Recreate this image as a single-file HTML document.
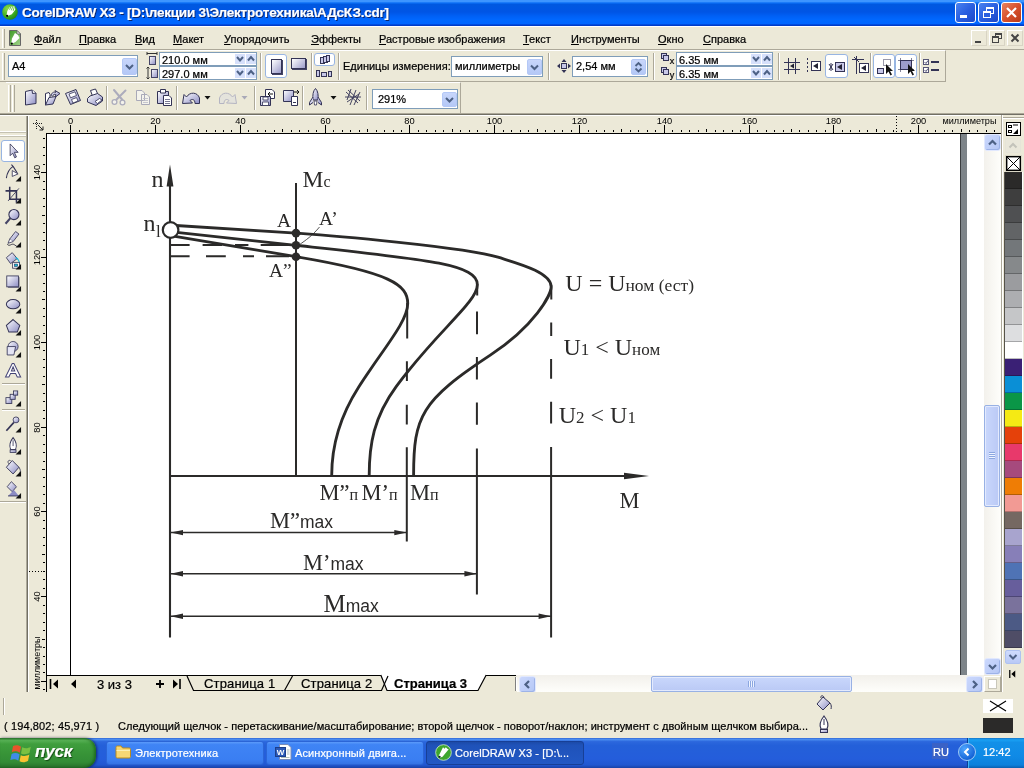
<!DOCTYPE html><html><head><meta charset="utf-8"><title>CorelDRAW X3</title><style>
*{box-sizing:border-box;margin:0;padding:0}
html,body{width:1024px;height:768px;overflow:hidden}
body{-webkit-text-stroke:0.22px currentColor;background:#ECE9D8;font-family:"Liberation Sans",sans-serif;font-size:11px;color:#000;position:relative}
.abs{position:absolute}
#title{left:0;top:0;width:1024px;height:26px;background:linear-gradient(to bottom,#3D95FF 0px,#3D95FF 1.5px,#0A6EF5 3px,#0058E0 4.5px,#0055E5 12px,#0060F5 16px,#0068FF 20px,#0066FF 23.5px,#0040D0 25px,#0038C0 26px)}
#title .t{left:22px;top:5px;color:#fff;font:bold 13.5px "Liberation Sans","DejaVu Sans",sans-serif;letter-spacing:-0.2px;white-space:nowrap;text-shadow:1px 1px 0 #0A246A}
.tb{top:2px;width:21px;height:21px;border:1px solid #fff;border-radius:3px;background:linear-gradient(135deg,#4A82F0 0%,#2A5FE0 50%,#1C48C8 100%)}
.tb.close{background:linear-gradient(135deg,#E8835F 0%,#D8512C 50%,#B83A18 100%)}
#menu{left:0;top:26px;width:1024px;height:24px;border-bottom:1px solid #ACA899;border-top:1px solid #fff}
#menu span{position:absolute;top:6px;white-space:nowrap;font-size:11px}
#menu u{text-decoration:underline}
.mdi{top:30px;width:16px;height:16px;border:1px solid;border-color:#fff #d8d4c4 #d8d4c4 #fff;background:#ECE9D8}
.grip{width:3px;border-left:1px solid #fff;border-right:1px solid #ACA899;background:#ECE9D8}
.field{background:#fff;border:1px solid #7F9DB9}
.combo-btn{background:linear-gradient(to bottom,#C8D6FB,#B4C8F6);border:1px solid #B4C8F6;border-radius:2px}
.sep{width:2px;border-left:1px solid #ACA899;border-right:1px solid #fff}
.txt{white-space:nowrap;font-size:11px}
</style></head><body><div id="root" style="position:absolute;left:0;top:0;width:1024px;height:768px;will-change:transform"><svg width="0" height="0" style="position:absolute"><defs><linearGradient id="gi" x1="0" y1="0" x2="1" y2="1"><stop offset="0" stop-color="#fff"/><stop offset="1" stop-color="#8C8CC4"/></linearGradient></defs></svg>
<div id="title" class="abs">
<svg class="abs" style="left:1px;top:3px" width="18" height="18" viewBox="1 3 18 18"><defs><radialGradient id="gc" cx="0.35" cy="0.3" r="0.8"><stop offset="0" stop-color="#8EDB4A"/><stop offset="0.6" stop-color="#3DAE22"/><stop offset="1" stop-color="#1C7A12"/></radialGradient></defs><circle cx="10" cy="12" r="7.800" fill="url(#gc)"/><path d="M6.400 16.400 L7.300 11 L10 6.800 L14.800 6.300 L15.300 9.800 L11.800 14.200 Z" fill="#fff"/><path d="M10.800 6.700 L9.600 9.700 M12.600 6.500 L11.400 10.300 M14.400 6.400 L13.200 10.800" stroke="#3DAE22" stroke-width="0.8"/><circle cx="7.100" cy="15.800" r="1.100" fill="#000"/></svg>
<div class="abs t">CorelDRAW X3 - [D:\лекции 3\Электротехника\АДсКЗ.cdr]</div>
<div class="abs tb" style="left:955px"><div class="abs" style="left:4px;top:12px;width:7px;height:3px;background:#fff"></div></div>
<div class="abs tb" style="left:978px"><div class="abs" style="left:7px;top:4px;width:8px;height:7px;border:1px solid #fff;border-top-width:2px"></div><div class="abs" style="left:4px;top:8px;width:8px;height:7px;border:1px solid #fff;border-top-width:2px;background:#2A5FE0"></div></div>
<div class="abs tb close" style="left:1001px"><svg width="19" height="19" viewBox="0 0 19 19"><path d="M5 5 L14 14 M14 5 L5 14" stroke="#fff" stroke-width="2.2"/></svg></div>
</div>
<div id="menu" class="abs">
<div class="abs grip" style="left:2px;top:2px;height:19px"></div>
<svg class="abs" style="left:9px;top:3px" width="13" height="16" viewBox="0 0 13 16"><defs><linearGradient id="gm" x1="0" y1="0" x2="1" y2="1"><stop offset="0" stop-color="#3E9A26"/><stop offset="1" stop-color="#A4D48C"/></linearGradient></defs><path d="M0.500 0.500 H8 L11.500 4 V15.500 H0.500 Z" fill="url(#gm)" stroke="#666"/><path d="M8 0.500 V4 H11.500 Z" fill="#EEE" stroke="#666" stroke-width="0.8"/><path d="M2.200 14 L3 8.500 L6 3 L9 5 L10.500 8 L6.500 12 Z" fill="#fff"/><circle cx="2.800" cy="13.600" r="1.100" fill="#000"/></svg>
<span style="left:34px"><u>Ф</u>айл</span>
<span style="left:79px"><u>П</u>равка</span>
<span style="left:135px"><u>В</u>ид</span>
<span style="left:173px"><u>М</u>акет</span>
<span style="left:224px"><u>У</u>порядочить</span>
<span style="left:311px"><u>Э</u>ффекты</span>
<span style="left:379px"><u>Р</u>астровые изображения</span>
<span style="left:523px"><u>Т</u>екст</span>
<span style="left:571px"><u>И</u>нструменты</span>
<span style="left:658px"><u>О</u>кно</span>
<span style="left:703px"><u>С</u>правка</span>
</div>
<div class="abs mdi" style="left:971px"><div class="abs" style="left:3px;top:10px;width:6px;height:2px;background:#444"></div></div>
<div class="abs mdi" style="left:989px"><div class="abs" style="left:5px;top:2px;width:7px;height:6px;border:1px solid #444;border-top-width:2px"></div><div class="abs" style="left:2px;top:5px;width:7px;height:7px;border:1px solid #444;border-top-width:2px;background:#ECE9D8"></div></div>
<div class="abs mdi" style="left:1007px"><svg width="14" height="14" viewBox="0 0 14 14"><path d="M3.5 3.5 L10.5 10.5 M10.5 3.5 L3.5 10.5" stroke="#444" stroke-width="2"/></svg></div>
<div class="abs" style="left:0;top:50px;width:946px;height:32px;border-top:1px solid #fff;border-bottom:1px solid #ACA899;border-right:1px solid #ACA899"></div>
<div class="abs grip" style="left:2px;top:53px;height:27px"></div>
<div class="abs field" style="left:8px;top:55px;width:130px;height:22px"><span class="abs txt" style="left:3px;top:4px">A4</span><div class="abs combo-btn" style="left:113px;top:2px;width:15px;height:17px"><svg width="13" height="15" viewBox="0 0 13 15"><path d="M3.0 6.0 L6.5 9.5 L10.0 6.0" stroke="#4D6185" stroke-width="2" fill="none"/></svg></div></div>
<svg class="abs" style="left:146px;top:52px" width="12" height="28" viewBox="0 0 12 28"><path d="M1 1.5 H11 M1 0 V3 M11 0 V3" stroke="#333" fill="none"/><rect x="3.5" y="4.5" width="6" height="8" fill="url(#gi)" stroke="#446"/><path d="M2 15 V27 M0.5 16.5 L2 15 L3.5 16.5 M0.5 25.5 L2 27 L3.5 25.5" stroke="#333" fill="none"/><rect x="5.5" y="17.5" width="6" height="8" fill="url(#gi)" stroke="#446"/></svg>
<div class="abs field" style="left:159px;top:52px;width:98px;height:14px"><span class="abs txt" style="left:2px;top:1px">210.0 мм</span><svg class="abs" style="left:75px;top:1px" width="22" height="10" viewBox="0 0 22 10"><rect x="0" y="0" width="10" height="10" fill="#D6E0FB"/><rect x="11" y="0" width="10" height="10" fill="#D6E0FB"/><path d="M2 3 L5 6.5 L8 3" stroke="#4D6185" stroke-width="2" fill="none"/><path d="M13 6.5 L16 3 L19 6.5" stroke="#4D6185" stroke-width="2" fill="none"/></svg></div>
<div class="abs field" style="left:159px;top:66px;width:98px;height:14px"><span class="abs txt" style="left:2px;top:1px">297.0 мм</span><svg class="abs" style="left:75px;top:1px" width="22" height="10" viewBox="0 0 22 10"><rect x="0" y="0" width="10" height="10" fill="#D6E0FB"/><rect x="11" y="0" width="10" height="10" fill="#D6E0FB"/><path d="M2 3 L5 6.5 L8 3" stroke="#4D6185" stroke-width="2" fill="none"/><path d="M13 6.5 L16 3 L19 6.5" stroke="#4D6185" stroke-width="2" fill="none"/></svg></div>
<div class="abs sep" style="left:260px;top:53px;height:27px"></div>
<div class="abs" style="left:265px;top:54px;width:22px;height:24px;border:1px solid #98B5E2;border-radius:3px;background:#fff"><div class="abs" style="left:5px;top:4px;width:11px;height:15px;border:1px solid #335;background:linear-gradient(135deg,#fff,#9C9CCB);box-shadow:1px 1px 0 #446"></div></div>
<div class="abs" style="left:291px;top:58px;width:15px;height:11px;border:1px solid #335;background:linear-gradient(135deg,#fff,#9C9CCB);box-shadow:1px 1px 0 #446"></div>
<div class="abs sep" style="left:311px;top:53px;height:27px"></div>
<div class="abs" style="left:314px;top:53px;width:21px;height:13px;border:1px solid #98B5E2;border-radius:3px;background:#fff"><svg class="abs" style="left:4px;top:1px" width="12" height="10" viewBox="0 0 12 10"><rect x="1.5" y="2.5" width="4" height="6" fill="#C8C8E8" stroke="#335"/><rect x="4.5" y="1.5" width="4" height="6" fill="#C8C8E8" stroke="#335"/><rect x="7.5" y="0.5" width="3" height="6" fill="#C8C8E8" stroke="#335"/></svg></div>
<svg class="abs" style="left:316px;top:69px" width="18" height="9" viewBox="0 0 18 9"><rect x="0.5" y="1.5" width="3" height="6" fill="#C8C8E8" stroke="#335"/><rect x="5.5" y="3.5" width="5" height="4" fill="#C8C8E8" stroke="#335"/><rect x="12.5" y="2.5" width="3" height="5" fill="#C8C8E8" stroke="#335"/></svg>
<div class="abs sep" style="left:338px;top:53px;height:27px"></div>
<span class="abs txt" style="left:343px;top:60px">Единицы измерения:</span>
<div class="abs field" style="left:451px;top:56px;width:92px;height:21px"><span class="abs txt" style="left:3px;top:3px">миллиметры</span><div class="abs combo-btn" style="left:75px;top:2px;width:15px;height:16px"><svg width="13" height="14" viewBox="0 0 13 14"><path d="M3.0 5.5 L6.5 9.0 L10.0 5.5" stroke="#4D6185" stroke-width="2" fill="none"/></svg></div></div>
<div class="abs sep" style="left:548px;top:53px;height:27px"></div>
<svg class="abs" style="left:557px;top:59px" width="14" height="14" viewBox="0 0 14 14"><rect x="4.5" y="4.5" width="5" height="5" fill="#C8C8E8" stroke="#335"/><path d="M7 0 L9.5 3 H4.5 Z M7 14 L9.5 11 H4.5 Z M0 7 L3 4.5 V9.5 Z M14 7 L11 4.5 V9.5 Z" fill="#335"/></svg>
<div class="abs field" style="left:572px;top:56px;width:76px;height:21px"><span class="abs txt" style="left:3px;top:3px">2,54 мм</span><div class="abs combo-btn" style="left:58px;top:2px;width:15px;height:16px"><svg width="13" height="14" viewBox="0 0 13 14"><path d="M3.5 6 L6.5 3 L9.5 6 M3.5 8.5 L6.5 11.5 L9.5 8.5" stroke="#4D6185" stroke-width="1.8" fill="none"/></svg></div></div>
<div class="abs sep" style="left:653px;top:53px;height:27px"></div>
<svg class="abs" style="left:660px;top:52px" width="16" height="14" viewBox="0 0 16 14"><rect x="1.5" y="1.5" width="5" height="5" fill="#C8C8E8" stroke="#335"/><rect x="3.5" y="3.5" width="5" height="5" fill="#C8C8E8" stroke="#335"/><text x="9.5" y="12" font-family="Liberation Sans,sans-serif" font-size="9" font-weight="bold" fill="#222">x</text></svg>
<div class="abs field" style="left:676px;top:52px;width:97px;height:14px"><span class="abs txt" style="left:2px;top:1px">6.35 мм</span><svg class="abs" style="left:74px;top:1px" width="22" height="10" viewBox="0 0 22 10"><rect x="0" y="0" width="10" height="10" fill="#D6E0FB"/><rect x="11" y="0" width="10" height="10" fill="#D6E0FB"/><path d="M2 3 L5 6.5 L8 3" stroke="#4D6185" stroke-width="2" fill="none"/><path d="M13 6.5 L16 3 L19 6.5" stroke="#4D6185" stroke-width="2" fill="none"/></svg></div>
<svg class="abs" style="left:660px;top:66px" width="16" height="14" viewBox="0 0 16 14"><rect x="1.5" y="1.5" width="5" height="5" fill="#C8C8E8" stroke="#335"/><rect x="3.5" y="3.5" width="5" height="5" fill="#C8C8E8" stroke="#335"/><text x="9.5" y="12" font-family="Liberation Sans,sans-serif" font-size="9" font-weight="bold" fill="#222">y</text></svg>
<div class="abs field" style="left:676px;top:66px;width:97px;height:14px"><span class="abs txt" style="left:2px;top:1px">6.35 мм</span><svg class="abs" style="left:74px;top:1px" width="22" height="10" viewBox="0 0 22 10"><rect x="0" y="0" width="10" height="10" fill="#D6E0FB"/><rect x="11" y="0" width="10" height="10" fill="#D6E0FB"/><path d="M2 3 L5 6.5 L8 3" stroke="#4D6185" stroke-width="2" fill="none"/><path d="M13 6.5 L16 3 L19 6.5" stroke="#4D6185" stroke-width="2" fill="none"/></svg></div>
<div class="abs sep" style="left:778px;top:53px;height:27px"></div>
<svg class="abs" style="left:784px;top:58px" width="16" height="16" viewBox="0 0 16 16"><path d="M4.5 0 V16 M11.5 0 V16 M0 4.5 H16 M0 11.5 H16" stroke="#335" fill="none"/><path d="M6 8 L10 5.5 V10.5 Z" fill="#223"/></svg>
<svg class="abs" style="left:806px;top:58px" width="16" height="16" viewBox="0 0 16 16"><path d="M1.5 0 V16" stroke="#335" stroke-dasharray="2 2"/><rect x="5.5" y="3.5" width="9" height="9" fill="#fff" stroke="#335"/><path d="M7 8 L12 5 V11 Z" fill="#223"/></svg>
<div class="abs" style="left:825px;top:54px;width:23px;height:24px;border:1px solid #98B5E2;border-radius:3px;background:#fff"><svg class="abs" style="left:2px;top:4px" width="18" height="16" viewBox="0 0 18 16"><path d="M1 5 L5 11 M5 5 L1 11 M3 4 V12" stroke="#335"/><rect x="7.5" y="3.5" width="9" height="9" fill="#C8C8E8" stroke="#335"/><path d="M9 8 L14 5 V11 Z" fill="#223"/></svg></div>
<svg class="abs" style="left:852px;top:56px" width="18" height="18" viewBox="0 0 18 18"><path d="M0 3.5 H12 M4.5 0 V18 M2 1 L7 6" stroke="#335"/><rect x="7.5" y="7.5" width="9" height="9" fill="#fff" stroke="#335"/><path d="M9 12 L14 9 V15 Z" fill="#223"/></svg>
<div class="abs sep" style="left:870px;top:53px;height:27px"></div>
<div class="abs" style="left:873px;top:54px;width:22px;height:24px;border:1px solid #98B5E2;border-radius:3px;background:#fff"><svg class="abs" style="left:2px;top:3px" width="18" height="18" viewBox="0 0 18 18"><rect x="7.5" y="1.5" width="7" height="6" fill="none" stroke="#335" stroke-dasharray="1 1"/><rect x="1.5" y="10.5" width="6" height="5" fill="#C8C8E8" stroke="#335"/><path d="M10 6 V16 L12.5 13.5 L14.5 17.5 L16 16.5 L14 13 H17 Z" fill="#111"/></svg></div>
<div class="abs" style="left:895px;top:54px;width:22px;height:24px;border:1px solid #98B5E2;border-radius:3px;background:#fff"><svg class="abs" style="left:2px;top:3px" width="18" height="18" viewBox="0 0 18 18"><rect x="2.5" y="2.5" width="11" height="9" fill="#9C9CCB" stroke="#335"/><path d="M0 2.5 H16 M2.5 0 V14 M13.5 0 V14 M0 11.5 H16" stroke="#335" stroke-width="0.6"/><path d="M10 6 V16 L12.5 13.5 L14.5 17.5 L16 16.5 L14 13 H17 Z" fill="#111"/></svg></div>
<div class="abs sep" style="left:919px;top:53px;height:27px"></div>
<svg class="abs" style="left:923px;top:58px" width="17" height="16" viewBox="0 0 17 16"><rect x="0.5" y="1.5" width="5" height="5" fill="#fff" stroke="#557"/><rect x="0.5" y="9.5" width="5" height="5" fill="#fff" stroke="#557"/><path d="M1.5 4 L3 5.5 L5 2.5 M1.5 12 L3 13.5 L5 10.5" stroke="#557" fill="none"/><path d="M8 4 H16 M8 12 H16" stroke="#335" stroke-width="2"/></svg>
<div class="abs" style="left:6px;top:82px;width:455px;height:31px;border-top:1px solid #fff;border-right:1px solid #ACA899"></div>
<div class="abs grip" style="left:8px;top:85px;height:27px"></div>
<div class="abs grip" style="left:12px;top:85px;height:27px"></div>
<svg class="abs" style="left:22px;top:88px" width="18" height="18" viewBox="0 0 18 18"><path d="M3.500 3.500 L10 2 L14 5 V15.500 L3.500 17 Z" fill="url(#gi)" stroke="#335" stroke-linejoin="round"/><path d="M10 2 L10.500 5.500 L14 5" fill="#fff" stroke="#335" stroke-linejoin="round"/></svg>
<svg class="abs" style="left:43px;top:88px" width="18" height="18" viewBox="0 0 18 18"><path d="M2.500 17 L2.500 5.500 L6 4.500 L7 6.500 L7 14 Z" fill="#fff" stroke="#335" stroke-linejoin="round"/><path d="M2.500 17 L6 9.500 L13 8.500 L10 16 Z" fill="url(#gi)" stroke="#335" stroke-linejoin="round"/><path d="M8 8 C8.500 4.500 11 3.500 12.500 4.500 L12 2.500 L17 5.500 L12.500 9 L12.800 6.500 C11.500 6 10 6.500 9.500 8.500" fill="url(#gi)" stroke="#335" stroke-linejoin="round"/></svg>
<svg class="abs" style="left:64px;top:88px" width="18" height="18" viewBox="0 0 18 18"><path d="M1.5 5.5 L12 1.5 L16.5 12.5 L6.5 16.5 Z" fill="url(#gi)" stroke="#335"/><path d="M5 6 L11 3.8 L12.5 7.5 L6.5 9.8 Z M7.5 11.5 L12.5 9.6 L14 13 L9 15 Z" fill="#fff" stroke="#335" stroke-width="0.8"/></svg>
<svg class="abs" style="left:86px;top:88px" width="18" height="18" viewBox="0 0 18 18"><path d="M4.500 2.500 L9.500 1 L12 6.500 L6.500 8 Z" fill="#fff" stroke="#335" stroke-linejoin="round"/><path d="M1.500 10.500 L4 8 L11.500 5.500 L16.500 9 L16.500 13 L10 17.500 L1.500 14 Z" fill="url(#gi)" stroke="#335" stroke-linejoin="round"/><path d="M9 13.500 L13.500 10.500 L16 12 L11.500 15.500 Z" fill="#fff" stroke="#335" stroke-width="0.8"/></svg>
<div class="abs sep" style="left:106px;top:86px;height:24px"></div>
<svg class="abs" style="left:110px;top:88px" width="18" height="18" viewBox="0 0 18 18"><path d="M4 2 L12.500 12 M15.500 2.500 L6 12" stroke="#ACACBC" stroke-width="2" fill="none" stroke-linecap="round"/><circle cx="4.500" cy="14" r="2.400" fill="#F4F3EC" stroke="#ACACBC" stroke-width="1.300"/><circle cx="12.500" cy="14.500" r="2.400" fill="#F4F3EC" stroke="#ACACBC" stroke-width="1.300"/></svg>
<svg class="abs" style="left:134px;top:88px" width="18" height="18" viewBox="0 0 18 18"><path d="M2.5 2.5 H8 L10.5 5 V12.5 H2.5 Z M7.5 6.5 H13 L15.5 9 V16.5 H7.5 Z" fill="#F4F3EC" stroke="#A9A9B8"/><path d="M9 10.5 H14 M9 12.5 H14 M9 14.5 H14" stroke="#B9B9C6" stroke-width="0.8"/></svg>
<svg class="abs" style="left:156px;top:88px" width="18" height="18" viewBox="0 0 18 18"><path d="M1.5 3.5 H12.5 V15.5 H1.5 Z" fill="url(#gi)" stroke="#335"/><path d="M4.5 1.5 H9.5 V5 H4.5 Z" fill="#fff" stroke="#335"/><path d="M7.5 7.5 H13 L15.5 10 V17.5 H7.5 Z" fill="#fff" stroke="#335"/><path d="M9 11.5 H14 M9 13.5 H14 M9 15.5 H14" stroke="#557" stroke-width="0.8"/></svg>
<div class="abs sep" style="left:176px;top:86px;height:24px"></div>
<svg class="abs" style="left:181px;top:88px" width="20" height="18" viewBox="0 0 20 18"><path d="M1.500 15.500 L3 6.500 L5.500 9 C9 3.500 16.500 4 18.500 10 L18.500 15.500 L14 15.500 C14 11.500 11.500 10.500 9 12.500 L11.500 15 Z" fill="url(#gi)" stroke="#335" stroke-linejoin="round"/></svg>
<svg class="abs" style="left:204px;top:96px" width="7" height="4" viewBox="0 0 7 4"><path d="M0.5 0 H6.5 L3.5 3.5 Z" fill="#111"/></svg>
<svg class="abs" style="left:218px;top:88px" width="20" height="18" viewBox="0 0 20 18"><path d="M18.500 15.500 L17 6.500 L14.500 9 C11 3.500 3.500 4 1.500 10 L1.500 15.500 L6 15.500 C6 11.500 8.500 10.500 11 12.500 L8.500 15 Z" fill="#E4E3DC" stroke="#B4B4C2" stroke-linejoin="round"/></svg>
<svg class="abs" style="left:241px;top:96px" width="7" height="4" viewBox="0 0 7 4"><path d="M0.5 0 H6.5 L3.5 3.5 Z" fill="#A9A9B8"/></svg>
<div class="abs sep" style="left:254px;top:86px;height:24px"></div>
<svg class="abs" style="left:259px;top:88px" width="18" height="18" viewBox="0 0 18 18"><path d="M6.5 1.5 H13 L15.5 4 V10.5 H6.5 Z" fill="#fff" stroke="#335"/><path d="M1.5 8.5 H11.5 V17.5 H1.5 Z" fill="url(#gi)" stroke="#335"/><path d="M4 9 H9 V12 H4 Z M3.5 14 H9.5 V17.5 H3.5 Z" fill="#fff" stroke="#335" stroke-width="0.8"/><path d="M14 6 H9 M11 4 L9 6 L11 8" stroke="#111" fill="none"/></svg>
<svg class="abs" style="left:282px;top:88px" width="18" height="18" viewBox="0 0 18 18"><path d="M1.5 2.5 H11.5 V13.5 H1.5 Z" fill="url(#gi)" stroke="#335"/><path d="M9.5 8.5 H15.5 V17.5 H9.5 Z" fill="#fff" stroke="#335"/><path d="M11 14.5 h3" stroke="#335"/><path d="M12 4 H17 M15 2 L17 4 L15 6" stroke="#111" fill="none"/></svg>
<div class="abs sep" style="left:302px;top:86px;height:24px"></div>
<svg class="abs" style="left:307px;top:88px" width="18" height="18" viewBox="0 0 18 18"><path d="M8.5 0.5 C11 3 11.5 7 11 12 H6 C5.5 7 6 3 8.5 0.5 Z" fill="url(#gi)" stroke="#335"/><path d="M6 9 L2.5 14.5 V17 L6 14.5 M11 9 L14.5 14.5 V17 L11 14.5" fill="url(#gi)" stroke="#335"/><path d="M7 13 H10 L9.5 17 H7.5 Z" fill="#fff" stroke="#335" stroke-width="0.8"/></svg>
<svg class="abs" style="left:330px;top:96px" width="7" height="4" viewBox="0 0 7 4"><path d="M0.5 0 H6.5 L3.5 3.5 Z" fill="#111"/></svg>
<svg class="abs" style="left:344px;top:88px" width="18" height="18" viewBox="0 0 18 18"><path d="M2 4 L14 15 M4 2 L16 13 M7 1 L3 12 M12 2 L6 17 M16 4 L10 17 M1 9 H17 M3 14 L15 6" stroke="#335" stroke-width="0.9" fill="none"/></svg>
<div class="abs sep" style="left:366px;top:86px;height:24px"></div>
<div class="abs field" style="left:372px;top:89px;width:86px;height:20px"><span class="abs txt" style="left:5px;top:3px">291%</span><div class="abs combo-btn" style="left:69px;top:2px;width:15px;height:15px"><svg width="13" height="13" viewBox="0 0 13 13"><path d="M3.0 5.0 L6.5 8.5 L10.0 5.0" stroke="#4D6185" stroke-width="2" fill="none"/></svg></div></div>
<div class="abs" style="left:0;top:113px;width:1024px;height:1px;background:#ACA899"></div>
<div class="abs" style="left:0;top:114px;width:1024px;height:1px;background:#716F64"></div>
<div class="abs" style="left:0;top:115px;width:1024px;height:1px;background:#fff"></div>
<div class="abs" style="left:0;top:116px;width:28px;height:576px;border-right:1px solid #716F64;background:#ECE9D8"></div><div class="abs" style="left:26px;top:116px;width:1px;height:576px;background:#ACA899"></div>
<div class="abs" style="left:0px;top:131px;width:26px;height:2px;border-top:1px solid #fff;border-bottom:1px solid #C5C2B2"></div><div class="abs" style="left:0px;top:135px;width:26px;height:2px;border-top:1px solid #fff;border-bottom:1px solid #C5C2B2"></div>
<div class="abs" style="left:1px;top:140px;width:24px;height:22px;border:1px solid #98B5E2;border-radius:3px;background:#fff"></div>
<svg class="abs" style="left:3px;top:141px" width="21" height="19.320" viewBox="0 0 25 23"><path d="M8.5 3.5 V17.5 L11.5 14.5 L14 20 L16 19 L13.5 13.5 H18 Z" fill="url(#gi)" stroke="#335"/></svg>
<svg class="abs" style="left:3px;top:163px" width="21" height="19.320" viewBox="0 0 25 23"><path d="M4 18 C5 10 9 6 12 4 M12 4 L10 2 M12 4 L17 12" stroke="#335" fill="none" stroke-width="1.3"/><path d="M11 9 L18 13 L11 16 Z" fill="#fff" stroke="#335"/><path d="M17.500 12.500 V19 H11 Z" fill="#111" transform="translate(4 3)"/></svg>
<svg class="abs" style="left:3px;top:185px" width="21" height="19.320" viewBox="0 0 25 23"><path d="M8 2 V17 H21 M3 7 H16 V21" stroke="#335" stroke-width="1.8" fill="none"/><path d="M6 19 L19 4" stroke="#335"/><path d="M17.500 12.500 V19 H11 Z" fill="#111" transform="translate(4 3)"/></svg>
<svg class="abs" style="left:3px;top:207px" width="21" height="19.320" viewBox="0 0 25 23"><circle cx="13" cy="9" r="6" fill="url(#gi)" stroke="#335" stroke-width="1.3"/><path d="M9 13 L3 20" stroke="#446" stroke-width="2.5"/><path d="M17.500 12.500 V19 H11 Z" fill="#111" transform="translate(4 3)"/></svg>
<svg class="abs" style="left:3px;top:229px" width="21" height="19.320" viewBox="0 0 25 23"><path d="M8 12 L15 3 L19 6 L12 15 Z" fill="url(#gi)" stroke="#335"/><path d="M8 12 L6 17 L12 15" fill="#fff" stroke="#335"/><path d="M5 18 C8 22 10 16 14 19 S 17 21 18 20" stroke="#223" fill="none"/><path d="M17.500 12.500 V19 H11 Z" fill="#111" transform="translate(4 3)"/></svg>
<svg class="abs" style="left:3px;top:251px" width="21" height="19.320" viewBox="0 0 25 23"><path d="M4 8 L11 2 L17 9 L9 15 Z" fill="url(#gi)" stroke="#335"/><path d="M15 8 C19 10 20 14 19 17" stroke="#19B5D8" stroke-width="1.6" fill="none"/><rect x="11.5" y="13.5" width="8" height="7" fill="#fff" stroke="#335"/><rect x="13.5" y="15.5" width="4" height="3" fill="#19B5D8" stroke="#335" stroke-width="0.7"/><path d="M17.500 12.500 V19 H11 Z" fill="#111" transform="translate(4 3)"/></svg>
<svg class="abs" style="left:3px;top:273px" width="21" height="19.320" viewBox="0 0 25 23"><rect x="4.5" y="3.5" width="14" height="13" fill="url(#gi)" stroke="#335"/><path d="M19 5 V17 H6" stroke="#446" fill="none"/><path d="M17.500 12.500 V19 H11 Z" fill="#111" transform="translate(4 3)"/></svg>
<svg class="abs" style="left:3px;top:295px" width="21" height="19.320" viewBox="0 0 25 23"><ellipse cx="12" cy="11" rx="8" ry="5.5" fill="url(#gi)" stroke="#335" stroke-width="1.2"/><path d="M17.500 12.500 V19 H11 Z" fill="#111" transform="translate(4 3)"/></svg>
<svg class="abs" style="left:3px;top:317px" width="21" height="19.320" viewBox="0 0 25 23"><path d="M12 3 L20 10 L17 18 H7 L4 10 Z" fill="url(#gi)" stroke="#335" stroke-width="1.2"/><path d="M17.500 12.500 V19 H11 Z" fill="#111" transform="translate(4 3)"/></svg>
<svg class="abs" style="left:3px;top:339px" width="21" height="19.320" viewBox="0 0 25 23"><circle cx="12" cy="9" r="6" fill="url(#gi)" stroke="#335"/><path d="M5 9 H15 L13 19 H5 Z" fill="#E4E4F4" stroke="#335"/><path d="M17.500 12.500 V19 H11 Z" fill="#111" transform="translate(4 3)"/></svg>
<svg class="abs" style="left:3px;top:361px" width="21" height="19.320" viewBox="0 0 25 23"><path d="M3 19 L11 3 H13 L21 19 H17 L15 15 H9 L7 19 Z M10 12 H14 L12 7 Z" fill="#fff" stroke="#447" stroke-width="1.2" fill-rule="evenodd"/></svg>
<div class="abs" style="left:2px;top:383px;width:23px;height:2px;border-top:1px solid #ACA899;border-bottom:1px solid #fff"></div>
<svg class="abs" style="left:3px;top:388px" width="21" height="19.320" viewBox="0 0 25 23"><rect x="3.5" y="11.5" width="7" height="7" fill="url(#gi)" stroke="#335"/><rect x="8.5" y="7.5" width="6" height="6" fill="url(#gi)" stroke="#335"/><rect x="12.5" y="3.5" width="5" height="5" fill="url(#gi)" stroke="#335"/><path d="M17.500 12.500 V19 H11 Z" fill="#111" transform="translate(4 3)"/></svg>
<div class="abs" style="left:2px;top:409px;width:23px;height:2px;border-top:1px solid #ACA899;border-bottom:1px solid #fff"></div>
<svg class="abs" style="left:3px;top:414px" width="21" height="19.320" viewBox="0 0 25 23"><path d="M4 20 L13 10" stroke="#335" stroke-width="2"/><circle cx="15.5" cy="7" r="3.5" fill="url(#gi)" stroke="#335"/><path d="M17.500 12.500 V19 H11 Z" fill="#111" transform="translate(4 3)"/></svg>
<svg class="abs" style="left:3px;top:436px" width="21" height="19.320" viewBox="0 0 25 23"><path d="M12 2 C8 7 7 11 9 16 H15 C17 11 16 7 12 2 Z" fill="#fff" stroke="#335" stroke-width="1.2"/><path d="M12 5 V12" stroke="#335"/><rect x="8.500" y="16.500" width="7" height="3" fill="url(#gi)" stroke="#335"/><path d="M17.500 12.500 V19 H11 Z" fill="#111" transform="translate(4 3)"/></svg>
<svg class="abs" style="left:3px;top:458px" width="21" height="19.320" viewBox="0 0 25 23"><path d="M4 11 L11 3 L19 11 L12 19 Z" fill="url(#gi)" stroke="#335" stroke-width="1.1"/><path d="M9 3 C6 2 5 5 7 7" stroke="#335" fill="none"/><path d="M19 11 C21 14 21 16 20 18" stroke="#335" fill="none"/><path d="M17.500 12.500 V19 H11 Z" fill="#111" transform="translate(4 3)"/></svg>
<svg class="abs" style="left:3px;top:480px" width="21" height="19.320" viewBox="0 0 25 23"><path d="M5 8 L10 2 L16 8 L11 14 Z" fill="url(#gi)" stroke="#335"/><path d="M6 19 H19 L13 12 Z" fill="#8C8CC4" stroke="none"/><path d="M6 19 H19" stroke="#335"/><path d="M17.500 12.500 V19 H11 Z" fill="#111" transform="translate(4 3)"/></svg>
<div class="abs" style="left:0px;top:501px;width:26px;height:2px;border-top:1px solid #ACA899;border-bottom:1px solid #fff"></div>
<div class="abs" style="left:28px;top:116px;width:973px;height:18px;background:#ECE9D8;border-left:1px solid #fff;border-bottom:1px solid #000"></div>
<div class="abs" style="left:28px;top:116px;width:19px;height:576px;background:#ECE9D8;border-left:1px solid #fff;border-right:1px solid #000"></div>
<div class="abs" style="left:28px;top:116px;width:19px;height:17px;background:#ECE9D8;border-left:1px solid #fff"></div>
<svg class="abs" style="left:33px;top:120px" width="12" height="12" viewBox="0 0 12 12"><path d="M3.5 0 V10 M0 3.5 H10" stroke="#222" stroke-dasharray="1 1"/><path d="M5 5 L10 10 M10 6.5 V10 H6.500" stroke="#222" fill="none"/></svg>
<svg class="abs" style="left:46px;top:116px" width="955" height="18" viewBox="46 116 955 18" font-family="Liberation Sans,sans-serif" font-size="9.300" fill="#000"><rect x="53" y="130" width="1" height="2" fill="#000"/><rect x="62" y="130" width="1" height="2" fill="#000"/><rect x="70" y="125" width="1" height="8" fill="#000"/><text x="70.5" y="124" text-anchor="middle">0</text><rect x="79" y="130" width="1" height="2" fill="#000"/><rect x="87" y="130" width="1" height="2" fill="#000"/><rect x="96" y="130" width="1" height="2" fill="#000"/><rect x="104" y="130" width="1" height="2" fill="#000"/><rect x="113" y="129" width="1" height="3" fill="#000"/><rect x="121" y="130" width="1" height="2" fill="#000"/><rect x="130" y="130" width="1" height="2" fill="#000"/><rect x="138" y="130" width="1" height="2" fill="#000"/><rect x="147" y="130" width="1" height="2" fill="#000"/><rect x="155" y="125" width="1" height="8" fill="#000"/><text x="155.5" y="124" text-anchor="middle">20</text><rect x="164" y="130" width="1" height="2" fill="#000"/><rect x="172" y="130" width="1" height="2" fill="#000"/><rect x="181" y="130" width="1" height="2" fill="#000"/><rect x="189" y="130" width="1" height="2" fill="#000"/><rect x="198" y="129" width="1" height="3" fill="#000"/><rect x="206" y="130" width="1" height="2" fill="#000"/><rect x="215" y="130" width="1" height="2" fill="#000"/><rect x="223" y="130" width="1" height="2" fill="#000"/><rect x="231" y="130" width="1" height="2" fill="#000"/><rect x="240" y="125" width="1" height="8" fill="#000"/><text x="240.5" y="124" text-anchor="middle">40</text><rect x="248" y="130" width="1" height="2" fill="#000"/><rect x="257" y="130" width="1" height="2" fill="#000"/><rect x="265" y="130" width="1" height="2" fill="#000"/><rect x="274" y="130" width="1" height="2" fill="#000"/><rect x="282" y="129" width="1" height="3" fill="#000"/><rect x="291" y="130" width="1" height="2" fill="#000"/><rect x="299" y="130" width="1" height="2" fill="#000"/><rect x="308" y="130" width="1" height="2" fill="#000"/><rect x="316" y="130" width="1" height="2" fill="#000"/><rect x="325" y="125" width="1" height="8" fill="#000"/><text x="325.5" y="124" text-anchor="middle">60</text><rect x="333" y="130" width="1" height="2" fill="#000"/><rect x="342" y="130" width="1" height="2" fill="#000"/><rect x="350" y="130" width="1" height="2" fill="#000"/><rect x="359" y="130" width="1" height="2" fill="#000"/><rect x="367" y="129" width="1" height="3" fill="#000"/><rect x="376" y="130" width="1" height="2" fill="#000"/><rect x="384" y="130" width="1" height="2" fill="#000"/><rect x="393" y="130" width="1" height="2" fill="#000"/><rect x="401" y="130" width="1" height="2" fill="#000"/><rect x="409" y="125" width="1" height="8" fill="#000"/><text x="409.5" y="124" text-anchor="middle">80</text><rect x="418" y="130" width="1" height="2" fill="#000"/><rect x="426" y="130" width="1" height="2" fill="#000"/><rect x="435" y="130" width="1" height="2" fill="#000"/><rect x="443" y="130" width="1" height="2" fill="#000"/><rect x="452" y="129" width="1" height="3" fill="#000"/><rect x="460" y="130" width="1" height="2" fill="#000"/><rect x="469" y="130" width="1" height="2" fill="#000"/><rect x="477" y="130" width="1" height="2" fill="#000"/><rect x="486" y="130" width="1" height="2" fill="#000"/><rect x="494" y="125" width="1" height="8" fill="#000"/><text x="494.5" y="124" text-anchor="middle">100</text><rect x="503" y="130" width="1" height="2" fill="#000"/><rect x="511" y="130" width="1" height="2" fill="#000"/><rect x="520" y="130" width="1" height="2" fill="#000"/><rect x="528" y="130" width="1" height="2" fill="#000"/><rect x="537" y="129" width="1" height="3" fill="#000"/><rect x="545" y="130" width="1" height="2" fill="#000"/><rect x="554" y="130" width="1" height="2" fill="#000"/><rect x="562" y="130" width="1" height="2" fill="#000"/><rect x="571" y="130" width="1" height="2" fill="#000"/><rect x="579" y="125" width="1" height="8" fill="#000"/><text x="579.5" y="124" text-anchor="middle">120</text><rect x="588" y="130" width="1" height="2" fill="#000"/><rect x="596" y="130" width="1" height="2" fill="#000"/><rect x="604" y="130" width="1" height="2" fill="#000"/><rect x="613" y="130" width="1" height="2" fill="#000"/><rect x="621" y="129" width="1" height="3" fill="#000"/><rect x="630" y="130" width="1" height="2" fill="#000"/><rect x="638" y="130" width="1" height="2" fill="#000"/><rect x="647" y="130" width="1" height="2" fill="#000"/><rect x="655" y="130" width="1" height="2" fill="#000"/><rect x="664" y="125" width="1" height="8" fill="#000"/><text x="664.5" y="124" text-anchor="middle">140</text><rect x="672" y="130" width="1" height="2" fill="#000"/><rect x="681" y="130" width="1" height="2" fill="#000"/><rect x="689" y="130" width="1" height="2" fill="#000"/><rect x="698" y="130" width="1" height="2" fill="#000"/><rect x="706" y="129" width="1" height="3" fill="#000"/><rect x="715" y="130" width="1" height="2" fill="#000"/><rect x="723" y="130" width="1" height="2" fill="#000"/><rect x="732" y="130" width="1" height="2" fill="#000"/><rect x="740" y="130" width="1" height="2" fill="#000"/><rect x="749" y="125" width="1" height="8" fill="#000"/><text x="749.5" y="124" text-anchor="middle">160</text><rect x="757" y="130" width="1" height="2" fill="#000"/><rect x="766" y="130" width="1" height="2" fill="#000"/><rect x="774" y="130" width="1" height="2" fill="#000"/><rect x="783" y="130" width="1" height="2" fill="#000"/><rect x="791" y="129" width="1" height="3" fill="#000"/><rect x="799" y="130" width="1" height="2" fill="#000"/><rect x="808" y="130" width="1" height="2" fill="#000"/><rect x="816" y="130" width="1" height="2" fill="#000"/><rect x="825" y="130" width="1" height="2" fill="#000"/><rect x="833" y="125" width="1" height="8" fill="#000"/><text x="833.5" y="124" text-anchor="middle">180</text><rect x="842" y="130" width="1" height="2" fill="#000"/><rect x="850" y="130" width="1" height="2" fill="#000"/><rect x="859" y="130" width="1" height="2" fill="#000"/><rect x="867" y="130" width="1" height="2" fill="#000"/><rect x="876" y="129" width="1" height="3" fill="#000"/><rect x="884" y="130" width="1" height="2" fill="#000"/><rect x="893" y="130" width="1" height="2" fill="#000"/><rect x="901" y="130" width="1" height="2" fill="#000"/><rect x="910" y="130" width="1" height="2" fill="#000"/><rect x="918" y="125" width="1" height="8" fill="#000"/><text x="918.5" y="124" text-anchor="middle">200</text><rect x="927" y="130" width="1" height="2" fill="#000"/><rect x="935" y="130" width="1" height="2" fill="#000"/><rect x="944" y="130" width="1" height="2" fill="#000"/><rect x="952" y="130" width="1" height="2" fill="#000"/><rect x="961" y="129" width="1" height="3" fill="#000"/><rect x="969" y="130" width="1" height="2" fill="#000"/><rect x="977" y="130" width="1" height="2" fill="#000"/><rect x="986" y="130" width="1" height="2" fill="#000"/><rect x="994" y="130" width="1" height="2" fill="#000"/><text x="942.500" y="124" textLength="54" lengthAdjust="spacingAndGlyphs">миллиметры</text><path d="M896.5 116 V133" stroke="#000" stroke-dasharray="1 2"/></svg>
<svg class="abs" style="left:29px;top:134px" width="17" height="558" viewBox="29 134 17 558" font-family="Liberation Sans,sans-serif" font-size="9.300" fill="#000"><rect x="43" y="138" width="2" height="1" fill="#000"/><rect x="43" y="147" width="2" height="1" fill="#000"/><rect x="43" y="155" width="2" height="1" fill="#000"/><rect x="43" y="164" width="2" height="1" fill="#000"/><rect x="41" y="172" width="5" height="1" fill="#000"/><text transform="translate(39.700 172.5) rotate(-90)" text-anchor="middle">140</text><rect x="43" y="181" width="2" height="1" fill="#000"/><rect x="43" y="189" width="2" height="1" fill="#000"/><rect x="43" y="198" width="2" height="1" fill="#000"/><rect x="43" y="206" width="2" height="1" fill="#000"/><rect x="42" y="215" width="3" height="1" fill="#000"/><rect x="43" y="223" width="2" height="1" fill="#000"/><rect x="43" y="232" width="2" height="1" fill="#000"/><rect x="43" y="240" width="2" height="1" fill="#000"/><rect x="43" y="249" width="2" height="1" fill="#000"/><rect x="41" y="257" width="5" height="1" fill="#000"/><text transform="translate(39.700 257.5) rotate(-90)" text-anchor="middle">120</text><rect x="43" y="266" width="2" height="1" fill="#000"/><rect x="43" y="274" width="2" height="1" fill="#000"/><rect x="43" y="283" width="2" height="1" fill="#000"/><rect x="43" y="291" width="2" height="1" fill="#000"/><rect x="42" y="299" width="3" height="1" fill="#000"/><rect x="43" y="308" width="2" height="1" fill="#000"/><rect x="43" y="316" width="2" height="1" fill="#000"/><rect x="43" y="325" width="2" height="1" fill="#000"/><rect x="43" y="333" width="2" height="1" fill="#000"/><rect x="41" y="342" width="5" height="1" fill="#000"/><text transform="translate(39.700 342.5) rotate(-90)" text-anchor="middle">100</text><rect x="43" y="350" width="2" height="1" fill="#000"/><rect x="43" y="359" width="2" height="1" fill="#000"/><rect x="43" y="367" width="2" height="1" fill="#000"/><rect x="43" y="376" width="2" height="1" fill="#000"/><rect x="42" y="384" width="3" height="1" fill="#000"/><rect x="43" y="393" width="2" height="1" fill="#000"/><rect x="43" y="401" width="2" height="1" fill="#000"/><rect x="43" y="410" width="2" height="1" fill="#000"/><rect x="43" y="418" width="2" height="1" fill="#000"/><rect x="41" y="427" width="5" height="1" fill="#000"/><text transform="translate(39.700 427.5) rotate(-90)" text-anchor="middle">80</text><rect x="43" y="435" width="2" height="1" fill="#000"/><rect x="43" y="444" width="2" height="1" fill="#000"/><rect x="43" y="452" width="2" height="1" fill="#000"/><rect x="43" y="461" width="2" height="1" fill="#000"/><rect x="42" y="469" width="3" height="1" fill="#000"/><rect x="43" y="477" width="2" height="1" fill="#000"/><rect x="43" y="486" width="2" height="1" fill="#000"/><rect x="43" y="494" width="2" height="1" fill="#000"/><rect x="43" y="503" width="2" height="1" fill="#000"/><rect x="41" y="511" width="5" height="1" fill="#000"/><text transform="translate(39.700 511.5) rotate(-90)" text-anchor="middle">60</text><rect x="43" y="520" width="2" height="1" fill="#000"/><rect x="43" y="528" width="2" height="1" fill="#000"/><rect x="43" y="537" width="2" height="1" fill="#000"/><rect x="43" y="545" width="2" height="1" fill="#000"/><rect x="42" y="554" width="3" height="1" fill="#000"/><rect x="43" y="562" width="2" height="1" fill="#000"/><rect x="43" y="571" width="2" height="1" fill="#000"/><rect x="43" y="579" width="2" height="1" fill="#000"/><rect x="43" y="588" width="2" height="1" fill="#000"/><rect x="41" y="596" width="5" height="1" fill="#000"/><text transform="translate(39.700 596.5) rotate(-90)" text-anchor="middle">40</text><rect x="43" y="605" width="2" height="1" fill="#000"/><rect x="43" y="613" width="2" height="1" fill="#000"/><rect x="43" y="622" width="2" height="1" fill="#000"/><rect x="43" y="630" width="2" height="1" fill="#000"/><rect x="42" y="639" width="3" height="1" fill="#000"/><rect x="43" y="647" width="2" height="1" fill="#000"/><rect x="43" y="656" width="2" height="1" fill="#000"/><rect x="43" y="664" width="2" height="1" fill="#000"/><rect x="43" y="672" width="2" height="1" fill="#000"/><rect x="41" y="681" width="5" height="1" fill="#000"/><rect x="43" y="689" width="2" height="1" fill="#000"/><text transform="translate(40 689.500) rotate(-90)" textLength="53" lengthAdjust="spacingAndGlyphs">миллиметры</text><path d="M29 571.500 H46" stroke="#000" stroke-dasharray="1 2"/></svg>
<div class="abs" style="left:47px;top:134px;width:937px;height:541px;background:#fff;overflow:hidden">
<div class="abs" style="left:23px;top:0;width:1px;height:541px;background:#000"></div>
<div class="abs" style="left:913px;top:0;width:1px;height:541px;background:#3a3d40"></div>
<div class="abs" style="left:914px;top:0;width:6px;height:541px;background:#7D8489"></div>
<svg class="abs" style="left:0;top:0" width="937" height="541" viewBox="47 134 937 541" font-family="Liberation Serif,serif" fill="#2B2A29"><path d="M170 180 V637.500" stroke="#2B2A29" stroke-width="2.1" fill="none"/><path d="M170 164.500 L173.400 186.500 H166.600 Z" fill="#2B2A29"/><path d="M169 476 H628" stroke="#2B2A29" stroke-width="2" fill="none"/><path d="M649 476 L624 479.300 V472.700 Z" fill="#2B2A29"/><path d="M296 183 V476" stroke="#2B2A29" stroke-width="2" fill="none"/><path d="M406.800 447.200 V541.500 M476.900 448.400 V594.500 M551.100 447 V637.500" stroke="#2B2A29" stroke-width="2" fill="none"/><path d="M407.200 303 V338.500 M406.900 361.300 V381 M406.800 404.800 V424.500" stroke="#2B2A29" stroke-width="2" fill="none"/><path d="M477.200 284 V295.500 M477 311.600 V334.300 M476.900 357 V379.600 M476.900 402.600 V424.800" stroke="#2B2A29" stroke-width="2" fill="none"/><path d="M551.300 285 V299.500 M551.200 322.500 V336 M551.100 359 V378.800 M551.100 401.800 V423.400" stroke="#2B2A29" stroke-width="2" fill="none"/><path d="M170 245 H189.600 M202.600 245 H222 M235 245 H248.400 M260.700 245 H289" stroke="#2B2A29" stroke-width="2.100" fill="none"/><path d="M170 256.300 H189.600 M206 256.300 H225.800 M243 256.300 H254 M266 256.300 H289" stroke="#2B2A29" stroke-width="2.100" fill="none"/><path d="M172.00 225.26 L296.00 233.10 C325.94 234.99 466.80 247.25 497.94 257.21 C516.35 263.11 551.15 271.90 551.15 286.76 C551.15 294.76 535.12 325.59 490.29 355.12 C421.09 400.71 413.60 416.09 413.60 475.50" stroke="#2B2A29" stroke-width="2.850" fill="none" stroke-linejoin="round"/><path d="M172.00 231.90 L296.00 245.30 C425.74 259.33 477.36 263.96 477.36 284.77 C477.36 302.30 437.26 330.74 396.34 386.41 C373.69 417.23 369.20 444.76 369.20 475.50" stroke="#2B2A29" stroke-width="2.850" fill="none" stroke-linejoin="round"/><path d="M172.00 235.96 L296.00 256.70 C391.19 272.62 407.73 284.87 407.73 303.48 C407.73 321.78 382.94 349.02 358.42 387.47 C337.97 419.53 331.70 448.52 331.70 475.50" stroke="#2B2A29" stroke-width="2.850" fill="none" stroke-linejoin="round"/><circle cx="170.600" cy="230" r="7.800" fill="#fff" stroke="#2B2A29" stroke-width="2.2"/><circle cx="296" cy="233.1" r="4.300" fill="#2B2A29"/><circle cx="296" cy="245.3" r="4.300" fill="#2B2A29"/><circle cx="296" cy="256.7" r="4.300" fill="#2B2A29"/><path d="M319.500 227 C312 236 306 240 299 245" stroke="#2B2A29" stroke-width="0.8" fill="none"/><path d="M170 532.6 H406.8" stroke="#2B2A29" stroke-width="1.500" fill="none"/><path d="M170.500 532.6 l12.500 -2.700 v5.400 Z M406.8 532.6 l-12.500 -2.700 v5.400 Z" fill="#2B2A29"/><path d="M170 573.8 H476.9" stroke="#2B2A29" stroke-width="1.500" fill="none"/><path d="M170.500 573.8 l12.500 -2.700 v5.400 Z M476.9 573.8 l-12.500 -2.700 v5.400 Z" fill="#2B2A29"/><path d="M170 616.3 H551.1" stroke="#2B2A29" stroke-width="1.500" fill="none"/><path d="M170.500 616.3 l12.500 -2.700 v5.400 Z M551.1 616.3 l-12.500 -2.700 v5.400 Z" fill="#2B2A29"/><text x="151.5" y="187.0" font-size="24" >n</text><text x="143.5" y="231.0" font-size="24" >n<tspan font-size="17" dy="6" dx="0.500">l</tspan></text><text x="302.5" y="186.7" font-size="23.5" >М<tspan font-size="16">с</tspan></text><text x="277.0" y="227.0" font-size="19.5" >А</text><text x="319.0" y="225.0" font-size="19.5" >А’</text><text x="269.0" y="276.5" font-size="19.5" >А”</text><text x="565.3" y="290.5" font-size="24" >U = U<tspan font-size="17.500">ном (ест)</tspan></text><text x="563.4" y="354.5" font-size="24" >U<tspan font-size="17">1</tspan> &lt; U<tspan font-size="17">ном</tspan></text><text x="558.7" y="423.0" font-size="24" >U<tspan font-size="17">2</tspan> &lt; U<tspan font-size="17">1</tspan></text><text x="319.4" y="499.5" font-size="22.5" >М”<tspan font-size="16">п</tspan></text><text x="361.5" y="499.5" font-size="22.5" >М’<tspan font-size="16">п</tspan></text><text x="410.0" y="499.5" font-size="22.5" >М<tspan font-size="16">п</tspan></text><text x="619.5" y="507.7" font-size="22.5" >М</text><text x="270.0" y="527.7" font-size="22.5" >М”<tspan font-family="Liberation Sans,sans-serif" font-size="17.500">max</tspan></text><text x="303.0" y="570.0" font-size="22.5" >М’<tspan font-family="Liberation Sans,sans-serif" font-size="17.500">max</tspan></text><text x="323.5" y="612.3" font-size="25" >М<tspan font-family="Liberation Sans,sans-serif" font-size="17.500">max</tspan></text></svg>
</div>
<div class="abs" style="left:46px;top:675px;width:470px;height:1px;background:#000"></div><div class="abs" style="left:516px;top:675px;width:468px;height:1px;background:#F3F1EC"></div>
<div class="abs" style="left:984px;top:134px;width:17px;height:541px;background:linear-gradient(to right,#F3F1EC,#FEFEFB)"></div>
<div class="abs" style="left:984px;top:134px;width:17px;height:17px;border:1px solid #E1E8FE;border-radius:3px;background:linear-gradient(135deg,#CBD8FD,#B5C7F5);box-shadow:inset -1px -1px 0 #9DB3E8"><svg width="15" height="15" viewBox="0 0 15 15"><path d="M4 9.500 L7.500 6 L11 9.500" stroke="#4D6185" stroke-width="2.2" fill="none"/></svg></div>
<div class="abs" style="left:984px;top:658px;width:17px;height:17px;border:1px solid #E1E8FE;border-radius:3px;background:linear-gradient(135deg,#CBD8FD,#B5C7F5);box-shadow:inset -1px -1px 0 #9DB3E8"><svg width="15" height="15" viewBox="0 0 15 15"><path d="M4 6 L7.500 9.500 L11 6" stroke="#4D6185" stroke-width="2.2" fill="none"/></svg></div>
<div class="abs" style="left:984px;top:405px;width:16px;height:102px;border:1px solid #98B1E4;border-radius:2px;background:linear-gradient(to right,#C9D7FC,#BAC9F5);box-shadow:inset 0 0 0 1px #E3EAFE"><div class="abs" style="left:4px;top:46px;width:6px;height:7px;background:repeating-linear-gradient(to bottom,#8CA7E0 0,#8CA7E0 1px,#EEF3FF 1px,#EEF3FF 2px)"></div></div>
<div class="abs" style="left:517px;top:676px;width:467px;height:16px;background:linear-gradient(to bottom,#F3F1EC,#FEFEFB)"></div>
<div class="abs" style="left:515px;top:677px;width:2px;height:14px;border-left:1px solid #808080;border-right:1px solid #fff"></div>
<div class="abs" style="left:519px;top:676px;width:17px;height:17px;border:1px solid #E1E8FE;border-radius:3px;background:linear-gradient(135deg,#CBD8FD,#B5C7F5);box-shadow:inset -1px -1px 0 #9DB3E8"><svg width="15" height="15" viewBox="0 0 15 15"><path d="M9 4 L5.500 7.500 L9 11" stroke="#4D6185" stroke-width="2.2" fill="none"/></svg></div>
<div class="abs" style="left:966px;top:676px;width:17px;height:17px;border:1px solid #E1E8FE;border-radius:3px;background:linear-gradient(135deg,#CBD8FD,#B5C7F5);box-shadow:inset -1px -1px 0 #9DB3E8"><svg width="15" height="15" viewBox="0 0 15 15"><path d="M6 4 L9.500 7.500 L6 11" stroke="#4D6185" stroke-width="2.2" fill="none"/></svg></div>
<div class="abs" style="left:651px;top:676px;width:201px;height:16px;border:1px solid #98B1E4;border-radius:2px;background:linear-gradient(to bottom,#C9D7FC,#BAC9F5);box-shadow:inset 0 0 0 1px #E3EAFE"><div class="abs" style="left:96px;top:4px;width:7px;height:6px;background:repeating-linear-gradient(to right,#8CA7E0 0,#8CA7E0 1px,#EEF3FF 1px,#EEF3FF 2px)"></div></div>
<div class="abs" style="left:984px;top:676px;width:17px;height:16px;background:#ECE9D8;border:1px solid;border-color:#fff #ACA899 #ACA899 #fff"><div class="abs" style="left:3px;top:2px;width:9px;height:10px;background:#fff;border:1px solid #C9C7BA"></div></div>
<div class="abs" style="left:47px;top:676px;width:468px;height:16px;background:#ECE9D8"></div>
<svg class="abs" style="left:47px;top:674px" width="470" height="18" viewBox="47 674 470 18"><path d="M50.500 679 V689" stroke="#000" stroke-width="1.6"/><path d="M58 679.500 L53 684 L58 688.500 Z M76 679.500 L71 684 L76 688.500 Z" fill="#000"/><path d="M156 684 H164 M160 680 V688" stroke="#000" stroke-width="1.8"/><path d="M173 679.500 L178 684 L173 688.500 Z" fill="#000"/><path d="M180 679 V689" stroke="#000" stroke-width="1.6"/><path d="M380.500 674.500 L387 690.500 H478 L486.500 674.500 Z" fill="#fff"/><path d="M187 676 L193.500 690.500 H284.500 L292.500 676" fill="none" stroke="#000" stroke-width="1.2"/><path d="M284.500 690.500 H381.500 L388 676" fill="none" stroke="#000" stroke-width="1.2"/><path d="M380.800 675 L387 690.500 H478 L486.200 675 M486 675.500 H516" fill="none" stroke="#000" stroke-width="1.2"/></svg>
<span class="abs" style="left:97px;top:677px;font-size:13px;white-space:nowrap">3 из 3</span>
<span class="abs" style="left:204px;top:676px;font-size:13px;white-space:nowrap;letter-spacing:0.15px">Страница 1</span>
<span class="abs" style="left:301px;top:676px;font-size:13px;white-space:nowrap;letter-spacing:0.15px">Страница 2</span>
<span class="abs" style="left:394px;top:676px;font-size:13px;font-weight:bold;white-space:nowrap">Страница 3</span>
<div class="abs" style="left:1001px;top:115px;width:23px;height:577px;background:#ECE9D8;border-left:1px solid #ACA899"></div>
<div class="abs" style="left:1002px;top:115px;width:1px;height:577px;background:#fff"></div>
<div class="abs" style="left:1003px;top:117px;width:21px;height:2px;border-top:1px solid #ACA899;border-bottom:1px solid #fff"></div>
<svg class="abs" style="left:1006px;top:122px" width="15" height="14" viewBox="0 0 15 14"><rect x="0.5" y="0.5" width="14" height="13" fill="#fff" stroke="#000"/><rect x="2.5" y="3.500" width="3" height="2" fill="none" stroke="#000"/><rect x="2.5" y="8.5" width="3" height="2" fill="none" stroke="#000"/><path d="M7 3 H12" stroke="#000"/><path d="M12 7 V12 H7 Z" fill="#000"/></svg>
<div class="abs" style="left:1005px;top:138px;width:16px;height:15px;border:1px solid #E6E4D8;border-radius:2px;background:#E9E7DA"><svg width="14" height="13" viewBox="0 0 14 13"><path d="M3.5 8.5 L7 5 L10.500 8.5" stroke="#C3C3BA" stroke-width="2" fill="none"/></svg></div>
<svg class="abs" style="left:1005px;top:155px" width="17" height="17" viewBox="0 0 17 17"><rect x="0.500" y="0.500" width="16" height="16" fill="#ECE9D8" stroke="#D8D5C4"/><rect x="1.700" y="1.700" width="13.600" height="13.600" fill="#fff" stroke="#000" stroke-width="1.400"/><path d="M2 2 L15 15 M15 2 L2 15" stroke="#000"/></svg>
<div class="abs" style="left:1005px;top:172px;width:17px;height:17px;background:#2B2A29;border-bottom:1px solid rgba(0,0,0,.25)"></div>
<div class="abs" style="left:1005px;top:189px;width:17px;height:17px;background:#3E3E3E;border-bottom:1px solid rgba(0,0,0,.25)"></div>
<div class="abs" style="left:1005px;top:206px;width:17px;height:17px;background:#4F5052;border-bottom:1px solid rgba(0,0,0,.25)"></div>
<div class="abs" style="left:1005px;top:223px;width:17px;height:17px;background:#626466;border-bottom:1px solid rgba(0,0,0,.25)"></div>
<div class="abs" style="left:1005px;top:240px;width:17px;height:17px;background:#73777A;border-bottom:1px solid rgba(0,0,0,.25)"></div>
<div class="abs" style="left:1005px;top:257px;width:17px;height:17px;background:#86898B;border-bottom:1px solid rgba(0,0,0,.25)"></div>
<div class="abs" style="left:1005px;top:274px;width:17px;height:17px;background:#9B9C9F;border-bottom:1px solid rgba(0,0,0,.25)"></div>
<div class="abs" style="left:1005px;top:291px;width:17px;height:17px;background:#ADAEB1;border-bottom:1px solid rgba(0,0,0,.25)"></div>
<div class="abs" style="left:1005px;top:308px;width:17px;height:17px;background:#C5C6C8;border-bottom:1px solid rgba(0,0,0,.25)"></div>
<div class="abs" style="left:1005px;top:325px;width:17px;height:17px;background:#DDDEE0;border-bottom:1px solid rgba(0,0,0,.25)"></div>
<div class="abs" style="left:1005px;top:342px;width:17px;height:17px;background:#FFFFFF;border-bottom:1px solid rgba(0,0,0,.25)"></div>
<div class="abs" style="left:1005px;top:359px;width:17px;height:17px;background:#3A2075;border-bottom:1px solid rgba(0,0,0,.25)"></div>
<div class="abs" style="left:1005px;top:376px;width:17px;height:17px;background:#0A8FD6;border-bottom:1px solid rgba(0,0,0,.25)"></div>
<div class="abs" style="left:1005px;top:393px;width:17px;height:17px;background:#0A9647;border-bottom:1px solid rgba(0,0,0,.25)"></div>
<div class="abs" style="left:1005px;top:410px;width:17px;height:17px;background:#F5EA14;border-bottom:1px solid rgba(0,0,0,.25)"></div>
<div class="abs" style="left:1005px;top:427px;width:17px;height:17px;background:#E5410A;border-bottom:1px solid rgba(0,0,0,.25)"></div>
<div class="abs" style="left:1005px;top:444px;width:17px;height:17px;background:#E8396B;border-bottom:1px solid rgba(0,0,0,.25)"></div>
<div class="abs" style="left:1005px;top:461px;width:17px;height:17px;background:#A64A7D;border-bottom:1px solid rgba(0,0,0,.25)"></div>
<div class="abs" style="left:1005px;top:478px;width:17px;height:17px;background:#EF7D05;border-bottom:1px solid rgba(0,0,0,.25)"></div>
<div class="abs" style="left:1005px;top:495px;width:17px;height:17px;background:#F29A94;border-bottom:1px solid rgba(0,0,0,.25)"></div>
<div class="abs" style="left:1005px;top:512px;width:17px;height:17px;background:#756862;border-bottom:1px solid rgba(0,0,0,.25)"></div>
<div class="abs" style="left:1005px;top:529px;width:17px;height:17px;background:#A8A4CE;border-bottom:1px solid rgba(0,0,0,.25)"></div>
<div class="abs" style="left:1005px;top:546px;width:17px;height:17px;background:#877FB8;border-bottom:1px solid rgba(0,0,0,.25)"></div>
<div class="abs" style="left:1005px;top:563px;width:17px;height:17px;background:#4F73B5;border-bottom:1px solid rgba(0,0,0,.25)"></div>
<div class="abs" style="left:1005px;top:580px;width:17px;height:17px;background:#675E9C;border-bottom:1px solid rgba(0,0,0,.25)"></div>
<div class="abs" style="left:1005px;top:597px;width:17px;height:17px;background:#7A729C;border-bottom:1px solid rgba(0,0,0,.25)"></div>
<div class="abs" style="left:1005px;top:614px;width:17px;height:17px;background:#4C5A85;border-bottom:1px solid rgba(0,0,0,.25)"></div>
<div class="abs" style="left:1005px;top:631px;width:17px;height:17px;background:#4F4D66;border-bottom:1px solid rgba(0,0,0,.25)"></div>
<div class="abs" style="left:1004px;top:172px;width:1px;height:476px;background:#55524A"></div>
<div class="abs" style="left:1022px;top:172px;width:1px;height:476px;background:#fff"></div>
<div class="abs" style="left:1005px;top:650px;width:16px;height:14px;border:1px solid #AFC2F1;border-radius:2px;background:linear-gradient(to bottom,#CFDBFD,#B9C9F6)"><svg width="14" height="12" viewBox="0 0 14 12"><path d="M3.500 4 L7 7.500 L10.500 4" stroke="#4D6185" stroke-width="2" fill="none"/></svg></div>
<svg class="abs" style="left:1009px;top:670px" width="7" height="8" viewBox="0 0 9 10"><path d="M1 0 V10" stroke="#000" stroke-width="1.6"/><path d="M8 0.500 L3 5 L8 9.500 Z" fill="#000"/></svg>
<div class="abs" style="left:0;top:692px;width:1024px;height:46px;background:#ECE9D8"></div>
<div class="abs" style="left:3px;top:698px;width:2px;height:17px;border-left:1px solid #ACA899;border-right:1px solid #fff"></div>
<span class="abs txt" style="left:4px;top:720px;letter-spacing:0.12px">( 194,802; 45,971 )</span>
<span class="abs txt" style="left:118px;top:720px;letter-spacing:0.055px">Следующий щелчок - перетаскивание/масштабирование; второй щелчок - поворот/наклон; инструмент с двойным щелчком выбира...</span>
<svg class="abs" style="left:815px;top:695px" width="18" height="18" viewBox="0 0 18 18"><path d="M2 9 L8 2 L15 8 L8 15 Z" fill="url(#gi)" stroke="#335"/><path d="M6 3 C5 0 9 0 9 3" stroke="#335" fill="none"/><path d="M15 8 C16.500 10 16.500 12 16 14" stroke="#335" fill="none"/></svg>
<svg class="abs" style="left:817px;top:715px" width="14" height="19" viewBox="0 0 14 19"><path d="M7 1 C3 6 2 10 4 14 H10 C12 10 11 6 7 1 Z" fill="#fff" stroke="#335" stroke-width="1.2"/><path d="M7 4 V10" stroke="#335"/><rect x="3.500" y="14.500" width="7" height="3" fill="url(#gi)" stroke="#335"/></svg>
<svg class="abs" style="left:983px;top:699px" width="30" height="14" viewBox="0 0 30 14"><rect width="30" height="14" fill="#fff"/><path d="M7 2 L23 12 M23 2 L7 12" stroke="#000" stroke-width="1.1"/></svg>
<div class="abs" style="left:983px;top:718px;width:30px;height:15px;background:#2B2A29"></div>
<div class="abs" style="left:0;top:738px;width:1024px;height:30px;background:linear-gradient(to bottom,#3168D5 0%,#4A8CF0 5%,#2C67DD 12%,#2460D9 25%,#245DDB 70%,#2157D0 90%,#1941A5 100%)"></div>
<div class="abs" style="left:0;top:738px;width:96px;height:30px;border-radius:0 12px 12px 0;background:linear-gradient(to bottom,#2E7D32 0%,#56B054 8%,#3F9E3D 20%,#379337 55%,#338C36 80%,#276F2A 100%);box-shadow:1px 0 3px rgba(0,0,40,.6), inset -2px 0 3px rgba(0,60,0,.45)"></div>
<svg class="abs" style="left:10px;top:743px" width="22" height="22" viewBox="-0.500 1 18 18"><path d="M2 3.500 C4 2.500 6 2.500 8.500 4 L7.500 9 C5 7.500 3 7.500 1 8.500 Z" fill="#E8542B"/><path d="M9.500 4.500 C12 5.500 14 5.500 16.500 4 L15.500 9 C13 10.500 11 10.500 8.500 9.500 Z" fill="#79C142"/><path d="M0.800 10 C3 9 5 9 7.300 10.300 L6.300 15.500 C4 14 2 14 -0.200 15 Z" fill="#3F8CE8"/><path d="M8.300 11 C10.800 12 12.800 12 15.300 10.500 L14.300 15.500 C11.800 17 9.800 17 7.300 16 Z" fill="#F7C331"/></svg>
<span class="abs" style="left:35px;top:742px;color:#fff;font:italic bold 17px 'Liberation Sans',sans-serif;text-shadow:1px 1px 1px rgba(0,40,0,.7);letter-spacing:-0.2px">пуск</span>
<div class="abs" style="left:106px;top:741px;width:158px;height:24px;border-radius:3px;background:linear-gradient(to bottom,#5C9BFB 0%,#3F84F5 12%,#3A7EF2 80%,#3573E4 100%);border:1px solid #2B65D6"></div>
<svg class="abs" style="left:115px;top:744px" width="17" height="16" viewBox="0 0 17 16"><path d="M1 3.500 C1 2.500 1.500 2 2.500 2 H6 L7.500 4 H14 C15 4 15.500 4.500 15.500 5.500 V12.500 C15.500 13.500 15 14 14 14 H2.500 C1.500 14 1 13.500 1 12.500 Z" fill="#F7D774" stroke="#B98B1E"/><path d="M1.500 6.500 H15" stroke="#FBEFB4"/></svg>
<span class="abs txt" style="left:135px;top:747px;color:#fff;letter-spacing:0.1px">Электротехника</span>
<div class="abs" style="left:266px;top:741px;width:158px;height:24px;border-radius:3px;background:linear-gradient(to bottom,#5C9BFB 0%,#3F84F5 12%,#3A7EF2 80%,#3573E4 100%);border:1px solid #2B65D6"></div>
<svg class="abs" style="left:275px;top:744px" width="17" height="16" viewBox="0 0 17 16"><path d="M4.500 0.500 H13 L16 3.500 V15.500 H4.500 Z" fill="#fff" stroke="#7A8CB8"/><rect x="0.5" y="3.500" width="10" height="9" fill="#2B59B7" stroke="#1B3E8C"/><text x="5.500" y="11" font-family="Liberation Sans,sans-serif" font-size="8" font-weight="bold" fill="#fff" text-anchor="middle">W</text><path d="M12 6 H14.500 M12 8 H14.500 M12 10 H14.500 M6 13.500 H14.500" stroke="#9AA" stroke-width="0.8"/></svg>
<span class="abs txt" style="left:295px;top:747px;color:#fff;letter-spacing:0.1px">Асинхронный двига...</span>
<div class="abs" style="left:426px;top:741px;width:158px;height:24px;border-radius:3px;background:linear-gradient(to bottom,#1C4AA8 0%,#1F52B9 15%,#2258C4 100%);border:1px solid #173F96"></div>
<svg class="abs" style="left:435px;top:744px" width="17" height="17" viewBox="0 0 18 18"><circle cx="9" cy="9" r="8.300" fill="#3FA62F" stroke="#D8F0D0" stroke-width="0.8"/><path d="M4 12.500 L8.500 3.500 L10 5 L11.500 3.500 L13 5 L14.500 5.500 L8 13.500 L5 14.500 Z" fill="#fff"/><circle cx="4.800" cy="13.600" r="1.200" fill="#123"/></svg>
<span class="abs txt" style="left:455px;top:747px;color:#fff;letter-spacing:0.1px">CorelDRAW X3 - [D:\...</span>
<div class="abs" style="left:967px;top:738px;width:57px;height:30px;background:linear-gradient(to bottom,#1674C7 0%,#19A0F3 6%,#1290E8 15%,#0F8AE6 60%,#0D80DC 90%,#0A5FB0 100%);border-left:1px solid #0B3F94;box-shadow:inset 1px 0 0 #3DB4F8"></div>
<div class="abs" style="left:932px;top:743px;width:16px;height:16px;background:#3A62C6"></div>
<span class="abs txt" style="left:933px;top:746px;color:#fff">RU</span>
<div class="abs" style="left:958px;top:743px;width:18px;height:18px;border-radius:9px;border:1px solid #9FCBF7;background:radial-gradient(circle at 35% 30%,#4DA6FF,#1766D8 70%,#0F4FB8)"><svg width="16" height="16" viewBox="0 0 16 16"><path d="M9.500 4.500 L6 8 L9.500 11.500" stroke="#fff" stroke-width="2" fill="none"/></svg></div>
<span class="abs txt" style="left:983px;top:746px;color:#fff">12:42</span>
</div></body></html>
